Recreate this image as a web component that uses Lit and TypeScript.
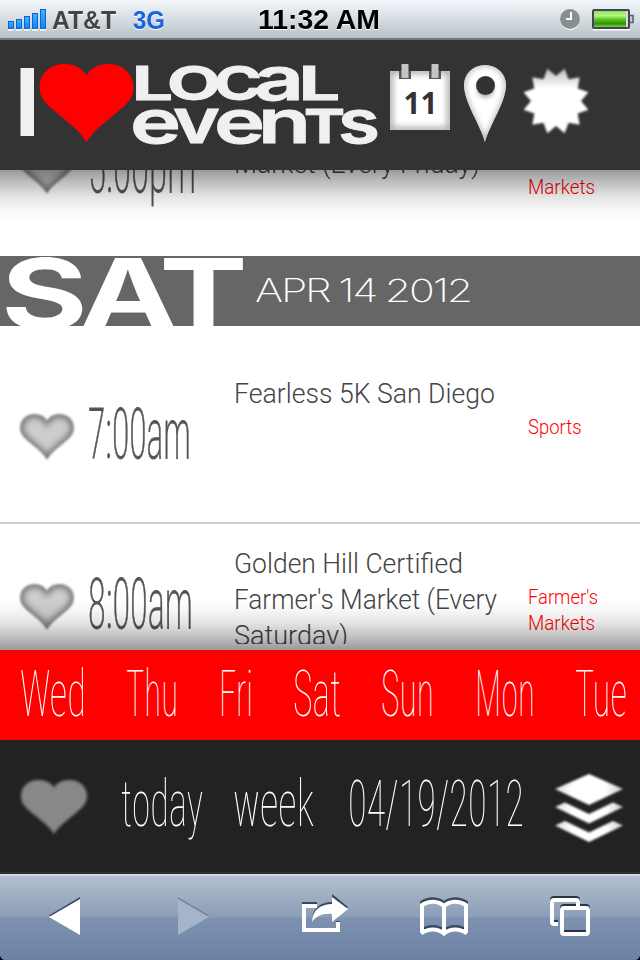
import { LitElement, html, css, svg } from "lit";
import { customElement } from "lit/decorators.js";

const HEART = "M50 84C43 72 32 64 20 54C7 43 0 37 0 25C0 10 12 0 26 0C38 0 46 5 50 12C54 5 62 0 74 0C88 0 100 10 100 25C100 37 93 43 80 54C68 64 57 72 50 84Z";

/** One line of text stretched to an exact width. */
const line = (text: string, width: number, size: number, cls: string, height: number, base: number) => html`
  <svg class=${cls} width=${width} height=${height}>
    <text x="0" y=${base} font-size=${size} textLength=${width} lengthAdjust="spacingAndGlyphs">${text}</text>
  </svg>`;

/** A group of wordmark letters sharing a size and weight. */
const mark = (text: string, x: number, y: number, width: number, size: number, weight: number) => svg`
  <text x=${x} y=${y} font-size=${size} font-weight=${weight} textLength=${width} lengthAdjust="spacingAndGlyphs">${text}</text>`;

const BURST = Array.from({ length: 24 }, (_, i) => {
  const a = ((i + 1) * Math.PI) / 12;
  const r = i % 2 ? 25 : 33.5;
  return `${32 + r * Math.sin(a)},${33 + r * Math.cos(a)}`;
}).join(" ");

const DAYS: [string, number][] = [["Wed", 66], ["Thu", 52], ["Fri", 34], ["Sat", 48], ["Sun", 53], ["Mon", 60], ["Tue", 52]];

type Line = [string, number];
interface EventRow { time: Line; title: Line[]; category: Line[]; cls: string; }

const FRIDAY: EventRow = {
  time: ["5:00pm", 108], title: [["", 1], ["Market (Every Friday)", 246]], category: [["", 1], ["Markets", 67]], cls: "last",
};
const SATURDAY: EventRow[] = [
  { time: ["7:00am", 103], title: [["Fearless 5K San Diego", 261]], category: [["Sports", 53.5]], cls: "first" },
  {
    time: ["8:00am", 105],
    title: [["Golden Hill Certified", 229], ["Farmer's Market (Every", 263], ["Saturday)", 114]],
    category: [["Farmer's", 70], ["Markets", 67]], cls: "",
  },
];

const row = (e: EventRow) => html`
  <div class="row ${e.cls}">
    <svg class="heart" width="54" height="46" viewBox="0 0 100 84" preserveAspectRatio="none">
      <defs>
        <clipPath id="hc"><path d=${HEART} /></clipPath>
        <filter id="hb" x="-20%" y="-20%" width="140%" height="140%"><feGaussianBlur stdDeviation="6" /></filter>
        <filter id="he" x="-20%" y="-20%" width="140%" height="140%"><feGaussianBlur stdDeviation="1.5" /></filter>
      </defs>
      <g filter="url(#he)">
        <g clip-path="url(#hc)">
          <path d=${HEART} fill="#cdcdcd" />
          <path d=${HEART} fill="none" stroke="#6a6a6a" stroke-width="12" filter="url(#hb)" />
        </g>
      </g>
    </svg>
    ${line(e.time[0], e.time[1], 71, "time", 60, 55)}
    <div class="title">${e.title.map(([t, w]) => line(t, w, 28.5, "", 36, 28.5))}</div>
    <div class="category">${e.category.map(([t, w]) => line(t, w, 20, "", 26, 20))}</div>
  </div>`;

@customElement("app-root")
export class AppRoot extends LitElement {
  static styles = css`
    :host { display: flex; flex-direction: column; width: 640px; height: 960px; overflow: hidden; background: #fff; font-family: Roboto, sans-serif; }
    * { box-sizing: border-box; }
    svg { display: block; overflow: visible; flex: none; }

    .status { position: relative; height: 40px; flex: none; display: flex; background: linear-gradient(#f1f6fa, #dbe2e7 16px, #bac1c5 38px, #6d777c 38px); font-family: "Liberation Sans", sans-serif; font-weight: bold; padding-left: 8px; }
    .bars { margin-right: 6px; }
    .carrier { fill: #444; margin-right: 17px; filter: drop-shadow(0 1px 0 #fff); }
    .net { fill: #1a63e0; margin-right: 93px; filter: drop-shadow(0 1px 0 #fff); }
    .clock { fill: #000; margin-right: 180px; filter: drop-shadow(0 1px 0 #fff); }
    .alarm { margin-right: 12px; }

    .top { height: 130px; flex: none; background: #333; display: flex; align-items: flex-start; padding: 24px 0 0 20px; position: relative; z-index: 2; }
    .logo { margin-right: 12px; font-family: Inter, sans-serif; fill: #f0f0f0; }
    .word { stroke: #f0f0f0; stroke-width: .9px; }
    .cal { margin-right: 14px; font-family: "Noto Sans", sans-serif; }
    .pin { margin-right: 18px; }
    .burst { margin-top: 4px; }

    .list { height: 480px; flex: none; overflow: hidden; position: relative; }
    .list::before, .list::after { content: ""; position: absolute; left: 0; right: 0; height: 50px; z-index: 1; }
    .list::before { top: 0; background: linear-gradient(rgba(0,0,0,.4), rgba(0,0,0,.25) 25%, rgba(0,0,0,.1) 55%, rgba(0,0,0,.03) 80%, transparent); }
    .list::after { bottom: 0; background: linear-gradient(transparent, rgba(0,0,0,.03) 20%, rgba(0,0,0,.1) 45%, rgba(0,0,0,.25) 75%, rgba(0,0,0,.4)); }
    .scroll { margin-top: -82px; }
    .row { height: 170px; border-bottom: 2px solid #ccc; display: flex; align-items: flex-start; padding: 20px 0 0 20px; }
    .row.first { height: 198px; padding-top: 48px; }
    .row.last { height: 168px; border: 0; }
    .heart { margin: 40px 14px 0 0; }
    .time { fill: #555; stroke: #555; stroke-width: .8px; font-weight: 200; font-stretch: 75%; margin-top: 29px; }
    .title { flex: none; height: 100px; width: 294px; overflow: hidden; fill: #444; font-weight: 300; margin-left: auto; }
    .category { flex: none; width: 112px; fill: #f00; font-weight: 300; margin-top: 40px; }
    .day { height: 70px; background: #666; display: flex; overflow: hidden; fill: #fff; font-family: Inter, sans-serif; padding-left: 1px; }
    .dow { font-weight: 700; margin-right: 14px; letter-spacing: -5px; }
    .date { font-weight: 200; letter-spacing: -1.6px; word-spacing: -1px; }

    .week { height: 90px; flex: none; background: #f00; display: flex; justify-content: space-between; padding: 6px 13px 0 20px; fill: #fff; font-weight: 100; font-stretch: 75%; }
    .nav { height: 132px; flex: none; background: #222; display: flex; align-items: flex-start; padding: 26px 0 0 21px; fill: #fff; font-weight: 100; font-stretch: 75%; }
    .fav { margin: 14px 34px 0 0; }
    .w1 { margin-right: 30px; }
    .w2 { margin-right: 34px; }
    .w3 { margin-right: 31px; }
    .layers { margin-top: 8px; }

    .tools { height: 88px; flex: none; background: linear-gradient(#2c2f34 2px, #d8dde4 2px, #ccd3dc 4px, #b3bfcf 4px, #8b9db7 45px, #7d92b1 46px, #6c82a3); }
  `;

  render() {
    return html`
      <div class="status">
        <svg class="bars" width="38" height="40">
          <defs><linearGradient id="sb" x2="0" y2="1"><stop stop-color="#35b8ff" /><stop offset="1" stop-color="#0d86f5" /></linearGradient></defs>
          ${[8, 10, 13, 16, 20].map((h, i) => svg`
            <rect x=${i * 8} y="29" width="6" height="1.5" fill="#fff" />
            <rect x=${i * 8 + 0.5} y=${29.5 - h} width="5" height=${h - 1} fill="url(#sb)" stroke="#1260cf" />`)}
        </svg>
        ${line("AT&T", 64, 26, "carrier", 40, 29)}
        ${line("3G", 32, 25.5, "net", 40, 29)}
        ${line("11:32 AM", 122, 28, "clock", 40, 29)}
        <svg class="alarm" width="20" height="40">
          <circle cx="10" cy="20" r="10" fill="#fff" /><circle cx="10" cy="19" r="10" fill="#87908f" />
          <path d="M11 12V19H6" fill="none" stroke="#fff" stroke-width="2" />
        </svg>
        <svg width="42" height="40">
          <defs><linearGradient id="bt" x2="0" y2="1"><stop stop-color="#8fe05c" /><stop offset=".3" stop-color="#b6f77f" /><stop offset=".5" stop-color="#62c92c" /><stop offset=".8" stop-color="#2a9400" /><stop offset="1" stop-color="#7cd53f" /></linearGradient></defs>
          <rect x="1" y="29" width="37" height="1.5" fill="#fff" />
          <rect x="1" y="10" width="36" height="18" rx="1" fill="#d8dce0" stroke="#41445c" stroke-width="2" />
          <rect x="2" y="11" width="32" height="16" fill="url(#bt)" />
          <path d="M38 15.500h3v7h-3" fill="#c4cad0" stroke="#565a70" stroke-width="1.500" />
        </svg>
      </div>

      <div class="top">
        <svg class="logo" width="358" height="80">
          <rect x=".5" y="4" width="13.500" height="68" />
          <path transform="translate(19.500 0) scale(.94 .93)" d=${HEART} fill="#f00" />
          <g class="word">
            ${mark("L", 112, 36, 41, 46, 700)}
            ${mark("O", 147, 36, 54, 46, 700)}
            ${mark("C", 194, 36, 48, 46, 700)}
            ${mark("a", 234, 36, 50, 60, 600)}
            ${mark("L", 279, 36, 41, 46, 700)}
            ${mark("e", 110, 79, 51, 60, 600)}
            ${mark("v", 153, 79, 47, 62, 600)}
            ${mark("e", 194, 79, 51, 60, 600)}
            ${mark("n", 238, 79, 53, 60, 600)}
            ${mark("T", 284, 79, 41, 46.5, 700)}
            ${mark("s", 318, 79, 42, 60, 600)}
          </g>
        </svg>
        <svg class="cal" width="60" height="66">
          <defs>
            <clipPath id="cc"><rect y="7" width="60" height="59" /></clipPath>
            <filter id="cb" x="-20%" y="-20%" width="140%" height="140%"><feGaussianBlur stdDeviation="3" /></filter>
          </defs>
          <rect y="7" width="60" height="59" fill="#fff" />
          <g clip-path="url(#cc)"><rect y="7" width="60" height="59" fill="none" stroke="#999" stroke-width="5" filter="url(#cb)" /></g>
          <path d="M9 7h12v8H9zM39 7h12v8H39z" fill="#555" />
          <path d="M11.500 0h7v14h-7zM41.500 0h7v14h-7z" fill="#c4c4c4" />
          <text x="13.500" y="50" font-size="30" font-weight="700" fill="#333" textLength="34" lengthAdjust="spacingAndGlyphs">11</text>
        </svg>
        <svg class="pin" width="42" height="78">
          <defs>
            <clipPath id="pc"><path d="M21 78C16 60 0 38 0 21A21 20 0 0 1 42 21C42 38 26 60 21 78Z" /></clipPath>
            <filter id="pb" x="-20%" y="-20%" width="140%" height="140%"><feGaussianBlur stdDeviation="2.500" /></filter>
            <filter id="soft"><feGaussianBlur stdDeviation=".6" /></filter>
          </defs>
          <g filter="url(#soft)">
            <g clip-path="url(#pc)">
              <rect width="42" height="78" fill="#fff" />
              <path d="M21 78C16 60 0 38 0 21A21 20 0 0 1 42 21C42 38 26 60 21 78Z" fill="none" stroke="#aaa" stroke-width="3" filter="url(#pb)" />
              <circle cx="21.500" cy="25" r="8" fill="#999" filter="url(#pb)" />
            </g>
            <circle cx="21.500" cy="21.500" r="9.500" fill="#333" />
          </g>
        </svg>
        <svg class="burst" width="64" height="66">
          <defs><linearGradient id="bg" x2="0" y2="1"><stop stop-color="#bbb" /><stop offset=".3" stop-color="#fff" /></linearGradient>
          <filter id="bs"><feGaussianBlur stdDeviation=".8" /></filter></defs>
          <polygon points=${BURST} fill="url(#bg)" filter="url(#bs)" />
        </svg>
      </div>

      <div class="list">
        <div class="scroll">
          ${row(FRIDAY)}
          <div class="day">
            ${line("SAT", 240, 98, "dow", 74, 73)}
            ${line("APR 14 2012", 216, 32, "date", 70, 46)}
          </div>
          ${SATURDAY.map(row)}
        </div>
      </div>

      <div class="week">${DAYS.map(([d, w]) => line(d, w, 64, "", 70, 60))}</div>

      <div class="nav">
        <svg class="fav" width="66" height="54" viewBox="0 0 100 84" preserveAspectRatio="none">
          <defs><filter id="fb" x="-20%" y="-20%" width="140%" height="140%"><feGaussianBlur stdDeviation="2.500" /></filter></defs>
          <path d=${HEART} fill="#888" filter="url(#fb)" />
        </svg>
        ${line("today", 82, 64, "w1", 80, 60)}
        ${line("week", 81, 64, "w2", 80, 60)}
        ${line("04/19/2012", 176, 64, "w3", 80, 60)}
        <svg class="layers" width="68" height="68">
          <defs>
            <linearGradient id="lg" x2="1" y2="0"><stop stop-color="#ddd" /><stop offset=".25" stop-color="#fff" /><stop offset=".75" stop-color="#fff" /><stop offset="1" stop-color="#ccc" /></linearGradient>
            <filter id="lf"><feGaussianBlur stdDeviation=".8" /></filter>
          </defs>
          <g fill="url(#lg)" filter="url(#lf)">
            <path d="M34 0L68 15L34 31L0 15Z" />
            <path d="M0 33L10 28.500L34 40L58 28.500L68 33L34 49.500Z" />
            <path d="M0 51.500L10 47L34 58.500L58 47L68 51.500L34 68Z" />
          </g>
        </svg>
      </div>

      <div class="tools">
        <svg width="640" height="88">
          <g fill="#39465c"><path d="M49 43.500L80 25V60Z" /><path d="M178 25L209 43.500L178 60Z" opacity=".35" /></g>
          <path d="M49 45L80 27V63Z" fill="#fff" />
          <path d="M178 27L209 45L178 63Z" fill="#a5b4c9" />
          <g>
            <g transform="translate(0 -2)" stroke="#39465c" fill="none" stroke-width="4"><path d="M317 34H304V60H338V51" /></g>
            <path d="M332 23L348 36L332 50V41C323 40 316 43 312 50C312 37 321 31 332 31Z" fill="#39465c" transform="translate(0 -1)" />
            <path d="M317 34H304V58H338V50" fill="none" stroke="#fff" stroke-width="4" />
            <path d="M332 25L348 37L332 50V42C323 41 316 44 312 50C312 38 321 32 332 32Z" fill="#fff" />
          </g>
          ${["#39465c", "#fff"].map((c, i) => svg`
            <path transform=${`translate(0 ${i ? 0 : -2.5})`} fill="none" stroke=${c} stroke-width="4"
              d="M422 60V33C429 28.500 438 28.500 444 34C450 28.500 459 28.500 466 33V60M444 34V60M421 61.500C428 56 438 56 444 61.500C450 56 460 56 467 61.500" />`)}
          ${["#2a3342", "#fff"].map((c, i) => svg`
            <g transform=${`translate(0 ${i ? 0 : -2})`} fill="none" stroke=${c} stroke-width="4">
              <path d="M558 52H554Q552 52 552 50V30Q552 28 554 28H576Q578 28 578 30V35" />
              <rect x="562" y="36" width="26" height="26" rx="2" />
            </g>`)}
          <path d="M0 88V84Q1 87 4 88ZM640 88V84Q639 87 636 88Z" fill="#000" />
        </svg>
      </div>`;
  }
}
